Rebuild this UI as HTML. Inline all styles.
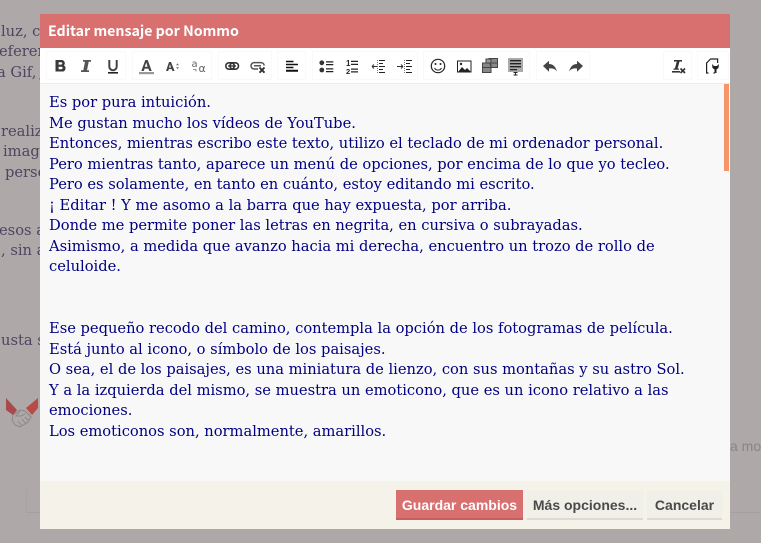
<!DOCTYPE html>
<html lang="es"><head><meta charset="utf-8"><title>Editar mensaje</title>
<style>
html,body{margin:0;padding:0;width:761px;height:543px;overflow:hidden;background:#aea8a8}
.bg{position:absolute;font:14.67px/20px "DejaVu Serif","Liberation Serif",serif;color:#4f4560;white-space:nowrap}
#modal{position:absolute;left:40px;top:14px;width:690px;height:515px;background:#f8f8f8}
#hd{position:absolute;left:0;top:0;width:690px;height:34px;background:#d87070;color:#fff}
#hd span{position:absolute;left:8px;top:0;white-space:nowrap;font:bold 14.2px/34px "Noto Sans CJK SC",sans-serif}
#tb{position:absolute;left:0;top:34px;width:690px;height:35px;background:#fff;border-bottom:1px solid #ececec}
.g{position:absolute;top:3px;height:29px;border:1px solid #f9f9f9;box-sizing:border-box}
#txt{position:absolute;left:9px;top:79px;width:640px;font:14.67px/20.56px "DejaVu Serif",serif;color:#000080;white-space:nowrap}
#txt div{height:20.56px}
#sb{position:absolute;left:684px;top:70px;width:5px;height:87px;background:#f4956a}
#ft{position:absolute;left:0;top:467px;width:690px;height:48px;background:#f5f2ea}
.b{position:absolute;top:9px;height:28px;border-bottom:2px solid #dcdad3;background:#f0efe8;color:#4a4a4a;font:bold 14px/30px "Liberation Sans",sans-serif;text-align:center;white-space:nowrap}
svg{position:absolute;left:0;top:0}
</style></head><body>
<div class="bg" style="left:1px;top:22px">luz, c</div>
<div class="bg" style="left:-1px;top:42px">eferen</div>
<div class="bg" style="left:-3px;top:63px">a Gif, j</div>
<div class="bg" style="left:1px;top:122px">realiz</div>
<div class="bg" style="left:3px;top:142px">imag</div>
<div class="bg" style="left:5px;top:163px">perso</div>
<div class="bg" style="left:-1px;top:221px">esos a</div>
<div class="bg" style="left:1px;top:241px">, sin a</div>
<div class="bg" style="left:1px;top:331px">usta s</div>
<div style="position:absolute;left:730px;top:438px;font:14px/16px 'Liberation Sans',sans-serif;color:#8a8484;white-space:nowrap">a mod</div>
<div style="position:absolute;left:26px;top:512px;width:735px;height:1px;background:#a5a0a0"></div>
<div style="position:absolute;left:26px;top:490px;width:1px;height:22px;background:#a9a3a3"></div>
<svg width="40" height="40" style="left:3px;top:394px" viewBox="0 0 40 40">
<path d="M3 4L14 16L10 21L3 16Z" fill="#a84a4a"/><path d="M35 4V14L29 21L23 14Z" fill="#b84a4a"/>
<path d="M10 21L17 16L22 17L28 23L25 28L17 33L12 31L9 26ZM17 17L13 22L18 22L22 20M15 27L19 32M19 25L23 30M22 23L26 27" fill="none" stroke="#8d8888" stroke-width="1"/></svg>

<div id="modal">
<div id="hd"><span>Editar mensaje por Nommo</span></div>
<div id="tb">
<div class="g" style="left:6px;width:80px"></div>
<div class="g" style="left:92px;width:80px"></div>
<div class="g" style="left:178px;width:54px"></div>
<div class="g" style="left:237px;width:29px"></div>
<div class="g" style="left:272px;width:106px"></div>
<div class="g" style="left:383px;width:107px"></div>
<div class="g" style="left:496px;width:54px"></div>
<div class="g" style="left:623px;width:29px"></div>
<div class="g" style="left:657px;width:32px"></div>
<svg width="690" height="35" viewBox="0 0 690 35" fill="#333">
<path d="M15.500 12h6a3.200 3.200 0 0 1 2.400 5.400a3.300 3.300 0 0 1-2.200 6.100h-6.200zM18.600 14.200v2.400h2.500a1.200 1.200 0 0 0 0-2.400zM18.600 18.800v2.500h2.800a1.250 1.250 0 0 0 0-2.500z" fill-rule="evenodd" fill="#3a3a3a"/>
<path d="M43 12h8v1.800h-2.300l-1.700 8.400h2v1.800h-8v-1.800h2.300l1.700-8.400h-2z" fill="#555"/>
<path d="M69.300 12v6.500a3.700 3.700 0 0 0 7.400 0V12" fill="none" stroke="#444" stroke-width="2"/><rect x="68" y="24" width="10" height="1.600" fill="#222"/>
<path d="M105.800 12h2.400l4 11h-2.500l-.8-2.400h-3.800l-.8 2.400h-2.500zM105.300 18.800h2.800L106.700 14.500z" fill="#444" fill-rule="evenodd" transform="translate(-.5 0)"/><rect x="99" y="24" width="15" height="2.200" fill="#999"/>
<path d="M129 14h2l3.600 9h-2.200l-.6-1.900h-3l-.6 1.900H126zM129 19.600h2L130 16.200z" fill="#444" fill-rule="evenodd"/><path d="M136 17.300l1.500-2 1.500 2zM136 19.300l1.500 2 1.500-2z" fill="#777"/>
<text x="151.500" y="19" font-family="DejaVu Sans" font-size="10" fill="#666">a</text><text x="158.500" y="24" font-family="DejaVu Sans" font-size="11" fill="#666">α</text><path d="M153 21.500h3v2" fill="none" stroke="#999"/>
<rect x="185.800" y="14.800" width="8.500" height="6.400" rx="3.200" fill="none" stroke="#333" stroke-width="1.600"/><rect x="190" y="14.800" width="8.500" height="6.400" rx="3.200" fill="none" stroke="#333" stroke-width="1.600"/><path d="M188 18h8" stroke="#333" stroke-width="1.400"/>
<path d="M218 21h-3.800a3.200 3.200 0 0 1 0-6.400h7a3.200 3.200 0 0 1 3 3M214 17.800h7" fill="none" stroke="#555" stroke-width="1.500"/><path d="M219.500 19.500l5 5.200m0-5.200l-5 5.200" stroke="#333" stroke-width="1.900"/>
<path d="M246 12.700h7.500v1.500H246zM246 15.700h12v1.500h-12zM246 18.700h7.500v1.500H246zM246 21.700h12v2h-12z" fill="#111"/>
<circle cx="281.800" cy="14.800" r="2.400" fill="#333"/><circle cx="281.800" cy="22" r="2.400" fill="#333"/><path d="M286 13.200h7.300v1.300H286zM286 16h7.300v1.300H286zM286 20.200h7.300v1.300H286zM286 23h7.300v1.300H286z" fill="#222"/>
<text x="306" y="18" font-family="Liberation Sans" font-size="8" font-weight="bold" fill="#222">1</text><text x="306" y="26" font-family="Liberation Sans" font-size="7.500" font-weight="bold" fill="#222">2</text><path d="M311 12.700h7v1.300h-7zM311 15.700h7V17h-7zM311 20.500h7v1.300h-7zM311 23.200h7v1.300h-7z" fill="#222"/>
<path d="M332 18.500h5M332 18.500l2-2m-2 2l2 2" fill="none" stroke="#333"/><path d="M337.500 12v13" stroke="#777" stroke-dasharray="1 1"/><path d="M339 12.500h6M339 15.500h4M339 18.500h6M339 21.500h4M339 24.500h6" stroke="#222"/>
<path d="M357 18.500h6M363 18.500l-2-2m2 2l-2 2" fill="none" stroke="#333"/><path d="M364.500 12v13" stroke="#777" stroke-dasharray="1 1"/><path d="M366 12.500h6M366 15.500h4M366 18.500h6M366 21.500h4M366 24.500h6" stroke="#222"/>
<circle cx="398" cy="18" r="6.700" fill="none" stroke="#222" stroke-width="1.200"/><circle cx="395.500" cy="16" r="1" fill="#222"/><circle cx="400.500" cy="16" r="1" fill="#222"/><path d="M394.500 20a4 4 0 0 0 7 0" fill="none" stroke="#222"/>
<rect x="417.500" y="13" width="13.500" height="11" fill="#fff" stroke="#222"/><path d="M418 24l4-5 3 3 2-2 4 4z" fill="#222"/><circle cx="421" cy="16" r="1.200" fill="#222"/>
<path d="M449 10.500h8.500v9H451zM442.500 15h8.500v9.500h-8.500z" fill="#888" stroke="#444"/><path d="M442.500 19.500h8.500M452 15h5M446 11h5v4h-5z" fill="#999" stroke="#444"/>
<rect x="468" y="10" width="15" height="14" fill="#aaa"/><path d="M470 12h11v1.400h-11zM470 15h11v1.400h-11zM470 18h11v1.400h-11zM470 21h7v1.200h-7z" fill="#222"/><path d="M473.500 24.500h4M475.500 24.500v2.500M473.500 27h4" stroke="#222" fill="none"/>
<path d="M503 18l6-5.300v3.300c4 0 6.500 2.500 8 7.500c-2-2.500-4-3.500-8-3v3.200z" fill="#444"/>
<path d="M543 18l-6-5.300v3.300c-4 0-6.500 2.500-8 7.500c2-2.500 4-3.500 8-3v3.200z" fill="#444"/>
<path d="M634 12h8v1.700l-1-.2h-1.500l-1.900 7h1.400v1.300h-5.500v-1.300h1.400l1.900-7h-1.500l-1.300.2z" fill="#333"/><rect x="632" y="23" width="8" height="1.600" fill="#333"/><path d="M640.500 20.500l4.500 4.500m0-4.500l-4.500 4.500" stroke="#333" stroke-width="1.700"/>
<path d="M668.500 25h-1.900V15l4-4h7v4M675 25h-1.500" fill="none" stroke="#222" stroke-width="1.200"/><path d="M672 16l.5 4 2 1.500v3.500h2v-3.500l2-1.500.5-4-2 2h-3z" fill="#222"/>
</svg>
</div>
<div id="txt">
<div>Es por pura intuición.</div>
<div>Me gustan mucho los vídeos de YouTube.</div>
<div>Entonces, mientras escribo este texto, utilizo el teclado de mi ordenador personal.</div>
<div>Pero mientras tanto, aparece un menú de opciones, por encima de lo que yo tecleo.</div>
<div>Pero es solamente, en tanto en cuánto, estoy editando mi escrito.</div>
<div>¡ Editar ! Y me asomo a la barra que hay expuesta, por arriba.</div>
<div>Donde me permite poner las letras en negrita, en cursiva o subrayadas.</div>
<div>Asimismo, a medida que avanzo hacia mi derecha, encuentro un trozo de rollo de</div>
<div>celuloide.</div>
<div></div>
<div></div>
<div>Ese pequeño recodo del camino, contempla la opción de los fotogramas de película.</div>
<div>Está junto al icono, o símbolo de los paisajes.</div>
<div>O sea, el de los paisajes, es una miniatura de lienzo, con sus montañas y su astro Sol.</div>
<div>Y a la izquierda del mismo, se muestra un emoticono, que es un icono relativo a las</div>
<div>emociones.</div>
<div>Los emoticonos son, normalmente, amarillos.</div>
</div>
<div id="sb"></div>
<div id="ft">
<div class="b" style="left:356px;width:127px;background:#d87070;color:#fff;border-bottom-color:#c46060">Guardar cambios</div>
<div class="b" style="left:487px;width:116px">Más opciones...</div>
<div class="b" style="left:607px;width:75px">Cancelar</div>
</div>
</div>
</body></html>
